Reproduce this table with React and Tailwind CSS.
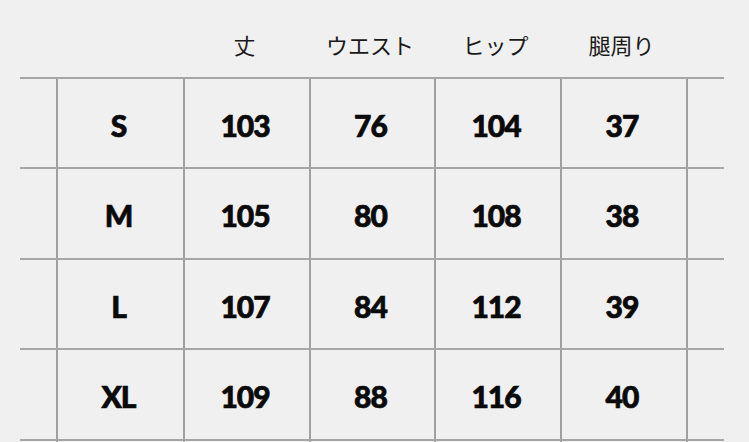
import React from 'react';

const headers = ['丈', 'ウエスト', 'ヒップ', '腿周り'];

const rows = [
  { size: 'S', values: [103, 76, 104, 37], h: 'h-[90px]' },
  { size: 'M', values: [105, 80, 108, 38], h: 'h-[91px]' },
  { size: 'L', values: [107, 84, 112, 39], h: 'h-[90px]' },
  { size: 'XL', values: [109, 88, 116, 40], h: 'h-[91px]' },
];

// col widths: lead 36, size col + 4 value cols, trailing 38
const gridCols = 'grid grid-cols-[36px_127px_126px_125px_126px_126px_38px]';

const App = () => {
  return (
    <div className="w-[749px] h-[442px] overflow-hidden bg-[#f0f0f0] pl-[20px]">
      {/* header */}
      <div className={`${gridCols} w-[704px] h-[77px] items-center pt-[10px]`}>
        <div />
        <div />
        {headers.map((h) => (
          <div
            key={h}
            className="pr-[3px] text-center text-[22px] font-normal text-[#1a1a1a] leading-none"
            style={{ fontFamily: '"Noto Sans CJK JP", "Noto Sans", sans-serif' }}
          >
            {h}
          </div>
        ))}
        <div />
      </div>

      {/* body */}
      {rows.map((r) => (
        <div key={r.size} className={`${gridCols} w-[704px] ${r.h} border-t-2 border-[#a6a6a6]`}>
          <div />
          <Cell>{r.size}</Cell>
          {r.values.map((v, i) => (
            <Cell key={i}>{v}</Cell>
          ))}
          <div className="border-l-2 border-[#a0a0a0]" />
        </div>
      ))}
      <div className={`${gridCols} w-[704px] h-[10px] border-t-2 border-[#a6a6a6]`}>
        <div />
        {[0, 1, 2, 3, 4, 5].map((i) => (
          <div key={i} className="border-l-2 border-[#a0a0a0]" />
        ))}
      </div>
    </div>
  );
};

const Cell = ({ children }) => (
  <div
    className="flex items-center justify-center border-l-2 border-[#a0a0a0] pt-[4px] pr-[4px] text-[30px] font-black tracking-[-1px] text-[#0a0a0a] [-webkit-text-stroke:0.7px_#0a0a0a]"
    style={{ fontFamily: 'Lato, "Noto Sans", sans-serif' }}
  >
    {children}
  </div>
);

export default App;
